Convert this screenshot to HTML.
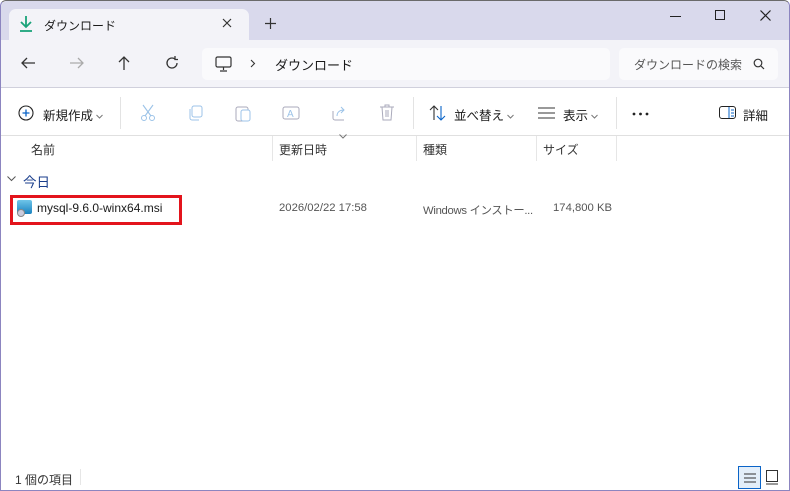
<!DOCTYPE html>
<html><head><meta charset="utf-8"><style>
*{margin:0;padding:0;box-sizing:border-box}
body{width:790px;height:491px;overflow:hidden;font-family:"Liberation Sans","Noto Sans CJK JP",sans-serif;background:#fff;position:relative;color:#1a1a1a}
.abs{position:absolute}
.t{font-size:12px;white-space:nowrap}
.chev{display:inline-block;width:7px;height:7px;vertical-align:middle;margin-left:3px}
</style></head><body>
<div class="abs" style="left:0;top:0;width:790px;height:491px;border:1px solid #8c85c0;border-top:1px solid #6a6a6a;border-radius:6px 6px 0 0;background:#fff"></div>
<div class="abs" style="left:1px;top:1px;width:788px;height:39px;background:#d9d9ec;border-radius:6px 6px 0 0"></div>
<div class="abs" style="left:9px;top:9px;width:240px;height:32px;background:#f3f3f8;border-radius:7px 7px 0 0"></div>
<svg class="abs" style="left:18px;top:15px" width="16" height="18"><path d="M8 1v11M3 7l5 5 5-5" stroke="#1aa37a" stroke-width="1.8" fill="none"/><path d="M2 16h12" stroke="#1aa37a" stroke-width="1.8"/></svg>
<div class="abs t" style="left:44px;top:17px;font-size:12px">ダウンロード</div>
<svg class="abs" style="left:222px;top:18px" width="10" height="10"><path d="M1 1l8 8M9 1l-8 8" stroke="#333" stroke-width="1.2"/></svg>
<svg class="abs" style="left:265px;top:18px" width="11" height="11"><path d="M5.5 0v11M0 5.5h11" stroke="#333" stroke-width="1.2"/></svg>
<div class="abs" style="left:670px;top:16px;width:11px;height:1px;background:#222"></div>
<div class="abs" style="left:715px;top:10px;width:10px;height:10px;border:1.2px solid #222"></div>
<svg class="abs" style="left:760px;top:10px" width="11" height="11"><path d="M0.5 0.5l10 10M10.5 0.5l-10 10" stroke="#222" stroke-width="1.2"/></svg>
<div class="abs" style="left:1px;top:40px;width:788px;height:48px;background:#f3f3f8;border-bottom:1px solid #d0d0dc"></div>
<svg class="abs" style="left:20px;top:56px" width="16" height="14"><path d="M15 7H2M7 2L2 7l5 5" stroke="#333" stroke-width="1.3" fill="none"/></svg>
<svg class="abs" style="left:69px;top:56px" width="16" height="14"><path d="M1 7h13M9 2l5 5-5 5" stroke="#aaa" stroke-width="1.3" fill="none"/></svg>
<svg class="abs" style="left:117px;top:55px" width="14" height="16"><path d="M7 15V2M2 7l5-5 5 5" stroke="#333" stroke-width="1.3" fill="none"/></svg>
<svg class="abs" style="left:165px;top:56px" width="14" height="14"><path d="M12 7a5 5 0 1 1-2-4M10 0v3.5h3" stroke="#333" stroke-width="1.3" fill="none"/></svg>
<div class="abs" style="left:202px;top:48px;width:408px;height:32px;background:#fafafc;border-radius:5px"></div>
<svg class="abs" style="left:215px;top:56px" width="17" height="16"><rect x="1" y="1" width="15" height="10" rx="1.5" stroke="#333" fill="none" stroke-width="1.2"/><path d="M8.5 11v3M5 15h7" stroke="#333" stroke-width="1.2"/></svg>
<svg class="abs" style="left:250px;top:59px" width="6" height="9"><path d="M1 1l3.5 3.5L1 8" stroke="#333" fill="none" stroke-width="1.1"/></svg>
<div class="abs t" style="left:275px;top:55px;font-size:13px">ダウンロード</div>
<div class="abs" style="left:619px;top:48px;width:159px;height:32px;background:#fafafc;border-radius:5px"></div>
<div class="abs t" style="left:634px;top:56px;font-size:12px;color:#555">ダウンロードの検索</div>
<svg class="abs" style="left:753px;top:58px" width="12" height="12"><circle cx="5" cy="5" r="3.8" stroke="#333" fill="none" stroke-width="1.2"/><path d="M8 8l3 3" stroke="#333" stroke-width="1.2"/></svg>
<svg class="abs" style="left:18px;top:105px" width="16" height="16"><circle cx="8" cy="8" r="7" stroke="#222" fill="none" stroke-width="1.1"/><path d="M8 4.5v7M4.5 8h7" stroke="#0a64c8" stroke-width="1.3"/></svg>
<div class="abs t" style="left:43px;top:105px;font-size:12.5px">新規作成<svg class="chev" viewBox="0 0 7 7"><path d="M0.5 2l3 3 3-3" stroke="#777" fill="none"/></svg></div>
<div class="abs" style="left:120px;top:97px;width:1px;height:32px;background:#e3e3e3"></div>
<svg class="abs" style="left:140px;top:104px" width="16" height="18"><path d="M3 1l8 11M13 1L5 12" stroke="#9cc3e8" stroke-width="1.1"/><circle cx="4" cy="14" r="2.5" stroke="#9cc3e8" fill="none"/><circle cx="12" cy="14" r="2.5" stroke="#9cc3e8" fill="none"/></svg>
<svg class="abs" style="left:187px;top:105px" width="16" height="16"><rect x="5" y="1" width="10" height="11" rx="2" stroke="#9cc3e8" fill="none"/><path d="M3 4v9a2 2 0 0 0 2 2h7" stroke="#9cc3e8" fill="none"/></svg>
<svg class="abs" style="left:235px;top:104px" width="16" height="18"><rect x="1" y="3" width="12" height="14" rx="2" stroke="#aab" fill="none"/><rect x="6" y="6" width="9" height="11" rx="2" stroke="#9cc3e8" fill="#fff"/></svg>
<svg class="abs" style="left:282px;top:105px" width="18" height="16"><rect x="1" y="2" width="16" height="12" rx="2" stroke="#aab" fill="none"/><text x="5" y="12" font-size="10" fill="#9cc3e8" font-family="Liberation Sans">A</text></svg>
<svg class="abs" style="left:331px;top:105px" width="16" height="16"><path d="M2 6v7a2 2 0 0 0 2 2h9" stroke="#aab" fill="none"/><path d="M6 11c0-4 3-6 7-6M10 2l3 3-3 3" stroke="#9cc3e8" fill="none"/></svg>
<svg class="abs" style="left:379px;top:104px" width="16" height="17"><path d="M1 3h14M6 3V1h4v2M3 3l1 13h8l1-13M7 6v7M9 6v7" stroke="#aab" fill="none"/></svg>
<div class="abs" style="left:413px;top:97px;width:1px;height:32px;background:#e3e3e3"></div>
<svg class="abs" style="left:429px;top:105px" width="18" height="16"><path d="M5 15V1M1 5l4-4 4 4" stroke="#333" fill="none" stroke-width="1.1"/><path d="M12 1v14M8 11l4 4 4-4" stroke="#0a64c8" fill="none" stroke-width="1.1"/></svg>
<div class="abs t" style="left:454px;top:105px;font-size:12.5px">並べ替え<svg class="chev" viewBox="0 0 7 7"><path d="M0.5 2l3 3 3-3" stroke="#777" fill="none"/></svg></div>
<svg class="abs" style="left:538px;top:107px" width="17" height="12"><path d="M0 1h17M0 6h17M0 11h17" stroke="#333" stroke-width="1"/></svg>
<div class="abs t" style="left:563px;top:105px;font-size:12.5px">表示<svg class="chev" viewBox="0 0 7 7"><path d="M0.5 2l3 3 3-3" stroke="#777" fill="none"/></svg></div>
<div class="abs" style="left:616px;top:97px;width:1px;height:32px;background:#e3e3e3"></div>
<svg class="abs" style="left:632px;top:112px" width="18" height="4"><circle cx="2" cy="2" r="1.4" fill="#222"/><circle cx="8.5" cy="2" r="1.4" fill="#222"/><circle cx="15" cy="2" r="1.4" fill="#222"/></svg>
<svg class="abs" style="left:719px;top:106px" width="18" height="13"><rect x="0.5" y="0.5" width="16" height="12" rx="2.5" stroke="#222" fill="none"/><path d="M10 1v11" stroke="#0a64c8"/><path d="M12 4h3M12 7h3M12 10h3" stroke="#0a64c8"/></svg>
<div class="abs t" style="left:743px;top:105px;font-size:12.5px">詳細</div>
<div class="abs" style="left:1px;top:135px;width:788px;height:1px;background:#e0e0e0"></div>
<div class="abs t" style="left:31px;top:141px;color:#333">名前</div>
<div class="abs" style="left:272px;top:136px;width:1px;height:25px;background:#e6e6e6"></div>
<svg class="abs" style="left:339px;top:134px" width="8" height="5"><path d="M0.5 0.5l3.5 3.5 3.5-3.5" stroke="#777" fill="none"/></svg>
<div class="abs t" style="left:279px;top:141px;color:#333">更新日時</div>
<div class="abs" style="left:416px;top:136px;width:1px;height:25px;background:#e6e6e6"></div>
<div class="abs t" style="left:423px;top:141px;color:#333">種類</div>
<div class="abs" style="left:536px;top:136px;width:1px;height:25px;background:#e6e6e6"></div>
<div class="abs t" style="left:543px;top:141px;color:#333">サイズ</div>
<div class="abs" style="left:616px;top:136px;width:1px;height:25px;background:#e6e6e6"></div>
<svg class="abs" style="left:7px;top:176px" width="9" height="6"><path d="M0.5 0.5l4 4 4-4" stroke="#555" fill="none"/></svg>
<div class="abs t" style="left:23px;top:171px;font-size:13.5px;color:#1a3e8c">今日</div>
<div class="abs" style="left:10px;top:195px;width:172px;height:30px;border:3px solid #e3141c"></div>
<div class="abs" style="left:17px;top:200px;width:15px;height:14px;background:linear-gradient(#6fc5e8,#1a82c0);border-radius:2px"></div>
<div class="abs" style="left:17px;top:209px;width:8px;height:8px;background:#ccd;border-radius:50%;border:1px solid #888"></div>
<div class="abs t" style="left:37px;top:201px;font-size:12px">mysql-9.6.0-winx64.msi</div>
<div class="abs t" style="left:279px;top:202px;color:#555;font-size:11.3px">2026/02/22 17:58</div>
<div class="abs t" style="left:423px;top:202px;color:#555;font-size:11.3px;letter-spacing:-0.3px">Windows インストー...</div>
<div class="abs t" style="left:553px;top:202px;color:#555;font-size:11.3px">174,800 KB</div>
<div class="abs t" style="left:15px;top:471px;color:#333">1 個の項目</div>
<div class="abs" style="left:80px;top:469px;width:1px;height:16px;background:#e6e6e6"></div>
<div class="abs" style="left:738px;top:466px;width:23px;height:23px;border:1px solid #0a64c8;background:#e3eef9"></div>
<svg class="abs" style="left:744px;top:473px" width="12" height="10"><path d="M0 1h12M0 5h12M0 9h12" stroke="#333"/></svg>
<svg class="abs" style="left:766px;top:470px" width="12" height="15"><rect x="0.5" y="0.5" width="11" height="11" stroke="#333" fill="none"/><path d="M0 14h12" stroke="#333"/></svg>
</body></html>
